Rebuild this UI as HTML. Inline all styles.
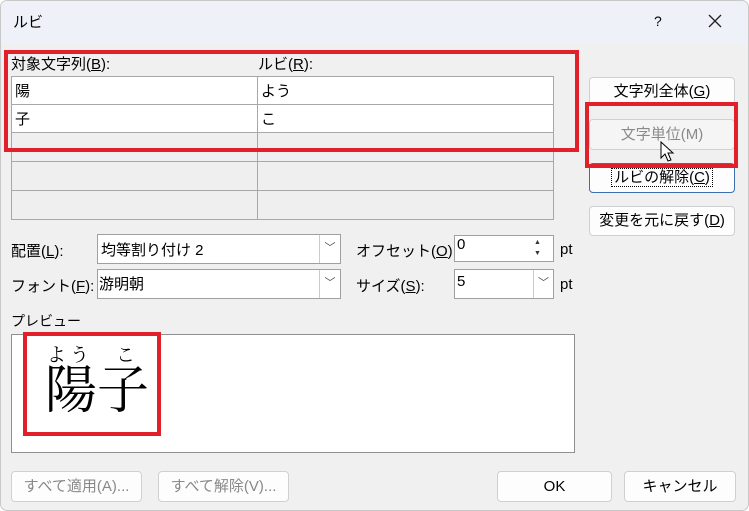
<!DOCTYPE html>
<html><head><meta charset="utf-8"><style>
*{box-sizing:border-box;margin:0;padding:0}
body{width:749px;height:511px;overflow:hidden;background:#fff;font-family:"Liberation Sans","Noto Sans CJK JP",sans-serif;font-size:15px;color:#000;position:relative}
.win{position:absolute;left:0;top:0;width:749px;height:511px;background:#f0f0f0;border:1px solid #c8c8c8;border-radius:7px;overflow:hidden}
.title{position:absolute;left:0;top:0;width:749px;height:42px;background:#eef2f8}
.a{position:absolute;white-space:nowrap}
.red{position:absolute;border:4px solid #e0202a}
.cell{position:absolute;border:1px solid #a8a8a8}
.btn{position:absolute;background:#fdfdfd;border:1px solid #d0d0d0;border-radius:4px;text-align:center;font-size:15px}
.box{position:absolute;background:#fff;border:1px solid #a0a0a0}
u{text-decoration:underline}
</style></head><body><div class="win">
<div class="title"></div>
<div class="a" style="left:12px;top:10px;font-size:15px">ルビ</div>
<div class="a" style="left:653px;top:12px;font-size:14px">?</div>
<svg class="a" style="left:707px;top:13px" width="14" height="14" viewBox="0 0 14 14"><path d="M1 1L13 13M13 1L1 13" stroke="#222" stroke-width="1.3"/></svg>

<div class="a" style="left:10px;top:52px">対象文字列(<u>B</u>):</div>
<div class="a" style="left:257px;top:52px">ルビ(<u>R</u>):</div>

<div class="cell" style="left:10px;top:75px;width:247px;height:29px;background:#fff"></div>
<div class="cell" style="left:256px;top:75px;width:297px;height:29px;background:#fff"></div>
<div class="cell" style="left:10px;top:103px;width:247px;height:29px;background:#fff"></div>
<div class="cell" style="left:256px;top:103px;width:297px;height:29px;background:#fff"></div>
<div class="cell" style="left:10px;top:131px;width:247px;height:30px;background:#efefef"></div>
<div class="cell" style="left:256px;top:131px;width:297px;height:30px;background:#efefef"></div>
<div class="cell" style="left:10px;top:160px;width:247px;height:30px;background:#efefef"></div>
<div class="cell" style="left:256px;top:160px;width:297px;height:30px;background:#efefef"></div>
<div class="cell" style="left:10px;top:189px;width:247px;height:30px;background:#efefef"></div>
<div class="cell" style="left:256px;top:189px;width:297px;height:30px;background:#efefef"></div>
<div class="a" style="left:14px;top:79px">陽</div>
<div class="a" style="left:14px;top:107px">子</div>
<div class="a" style="left:260px;top:79px">よう</div>
<div class="a" style="left:260px;top:107px">こ</div>
<div class="red" style="left:3px;top:49px;width:575px;height:102px"></div>

<div class="btn" style="left:588px;top:76px;width:146px;height:29px;line-height:27px">文字列全体(<u>G</u>)</div>
<div class="btn" style="left:588px;top:118px;width:146px;height:31px;line-height:29px;color:#8a8a8a;background:#f5f5f5">文字単位(M)</div>
<div class="btn" style="left:588px;top:162px;width:146px;height:30px;line-height:28px;border:1px solid #3a6fb0"><span style="border:1px dotted #000;padding:0 2px">ルビの解除(<u>C</u>)</span></div>
<div class="btn" style="left:588px;top:205px;width:146px;height:30px;line-height:28px">変更を元に戻す(<u>D</u>)</div>
<svg class="a" style="left:659px;top:140px" width="16" height="22" viewBox="0 0 16 22"><path d="M1 1 L1 17 L5 13 L8 20 L11 19 L8 12 L13 12 Z" fill="#fff" stroke="#000" stroke-width="1"/></svg>
<div class="red" style="left:584px;top:101px;width:153px;height:66px"></div>

<div class="a" style="left:10px;top:239px">配置(<u>L</u>):</div>
<div class="box" style="left:96px;top:233px;width:244px;height:30px"></div>
<div class="a" style="left:100px;top:238px">均等割り付け 2</div>
<div class="a" style="left:318px;top:234px;width:21px;height:28px;border-left:1px solid #ccc;text-align:center;line-height:26px;font-size:11px;color:#555">﹀</div>
<div class="a" style="left:10px;top:274px">フォント(<u>F</u>):</div>
<div class="box" style="left:96px;top:268px;width:244px;height:30px"></div>
<div class="a" style="left:98px;top:272px">游明朝</div>
<div class="a" style="left:318px;top:269px;width:21px;height:28px;border-left:1px solid #ccc;text-align:center;line-height:26px;font-size:11px;color:#555">﹀</div>

<div class="a" style="left:355px;top:239px">オフセット(<u>O</u>):</div>
<div class="box" style="left:453px;top:234px;width:100px;height:27px"></div>
<div class="a" style="left:456px;top:235px">0</div>
<div class="a" style="left:533px;top:236px;font-size:7px;line-height:11px;color:#333">▲<br>▼</div>
<div class="a" style="left:559px;top:240px">pt</div>
<div class="a" style="left:355px;top:274px">サイズ(<u>S</u>):</div>
<div class="box" style="left:453px;top:268px;width:100px;height:30px"></div>
<div class="a" style="left:456px;top:272px">5</div>
<div class="a" style="left:532px;top:269px;width:20px;height:28px;border-left:1px solid #ccc;text-align:center;line-height:26px;font-size:11px;color:#555">﹀</div>
<div class="a" style="left:559px;top:275px">pt</div>

<div class="a" style="left:10px;top:310px;font-size:14px">プレビュー</div>
<div class="box" style="left:10px;top:333px;width:564px;height:119px;border-color:#909090"></div>
<div class="a" style="left:46px;top:339px;font-family:'Noto Serif CJK SC',serif;font-size:19px;letter-spacing:4px">よう　こ</div>
<div class="a" style="left:44px;top:354px;font-family:'Noto Serif CJK SC',serif;font-size:52px;line-height:62px">陽子</div>
<div class="red" style="left:22px;top:331px;width:138px;height:104px"></div>

<div class="btn" style="left:10px;top:470px;width:131px;height:31px;line-height:29px;color:#888">すべて適用(A)...</div>
<div class="btn" style="left:157px;top:470px;width:131px;height:31px;line-height:29px;color:#888">すべて解除(V)...</div>
<div class="btn" style="left:496px;top:470px;width:115px;height:31px;line-height:29px">OK</div>
<div class="btn" style="left:623px;top:470px;width:112px;height:31px;line-height:29px">キャンセル</div>
</div></body></html>
